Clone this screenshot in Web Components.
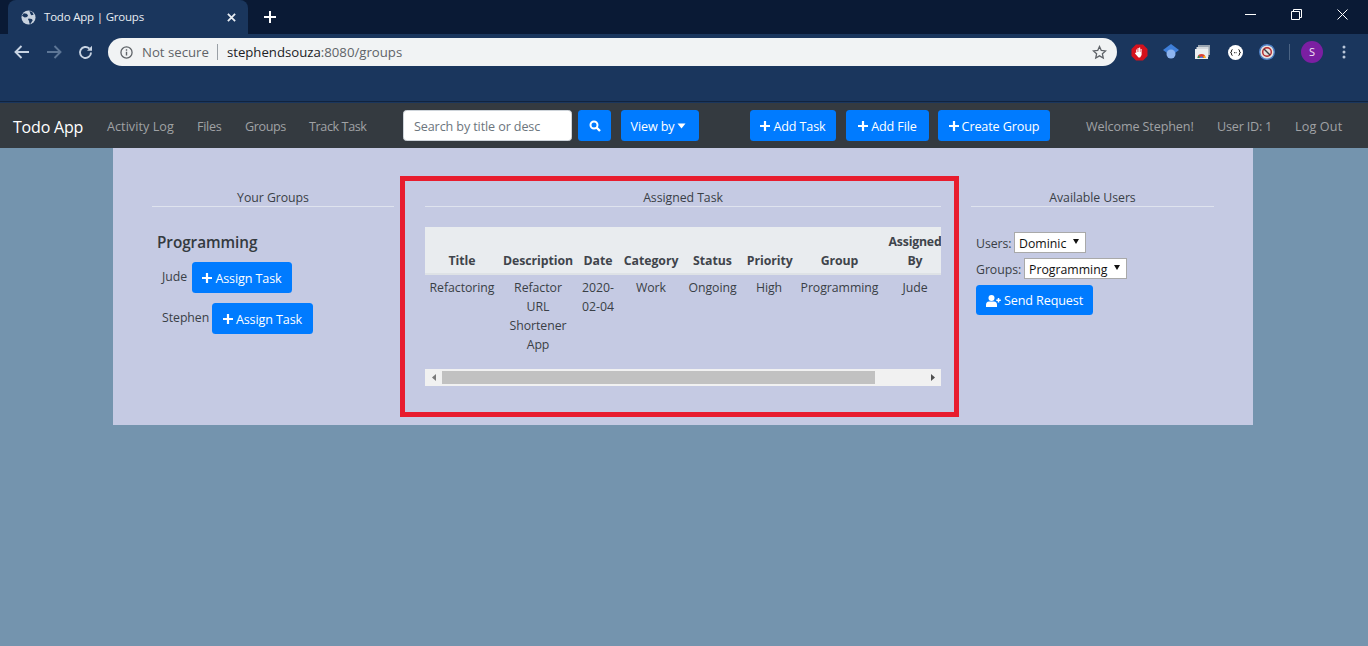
<!DOCTYPE html>
<html lang="en">
<head>
<meta charset="utf-8">
<title>Todo App | Groups</title>
<style>
  html, body { margin: 0; padding: 0; height: 646px; overflow: hidden; background: #7494ae; }
  body { font-family: "Open Sans", "Noto Sans", sans-serif; font-size: 12.6px; color: #3a3f46; }
</style>
</head>
<body>
<browser-frame></browser-frame>
<app-navbar></app-navbar>
<group-page></group-page>

<script>
const ICON_PLUS = `<svg width="10" height="10" viewBox="0 0 10 10"><path d="M5 0v10M0 5h10" stroke="#fff" stroke-width="2.2" fill="none"/></svg>`;

class BrowserFrame extends HTMLElement {
  constructor() {
    super();

    const template = document.createElement( 'template' );
    template.innerHTML = `
      <style>
      :host { display: block; height: 103px; background: #1a365d; font-family: "Open Sans", sans-serif; }
      .strip { height: 34px; background: #0a1a35; display: flex; align-items: flex-end; box-sizing: border-box; }
      .tab { margin-left: 8px; width: 240px; height: 34px; background: #1a365d; border-radius: 8px 8px 0 0;
        display: flex; align-items: center; box-sizing: border-box; padding: 0 12px 0 13px; color: #e8edf3; font-size: 11.500px; letter-spacing: -.2px; }
      .tab span { margin-left: 8px; flex: 1; margin-top: -2px; }
      .new { margin: 0 0 0 16px; height: 34px; display: flex; align-items: center; }
      .win { margin-left: auto; display: flex; align-items: center; height: 34px; padding-right: 20px; gap: 35px; padding-bottom: 6px; box-sizing: border-box; }
      .bar { height: 68px; box-sizing: border-box; border-bottom: 1px solid #10233f; display: flex; align-items: flex-start; padding: 4px 0 0 14px; }
      .nav { display: flex; align-items: center; height: 28px; gap: 16px; }
      .url { margin-left: 15px; width: 1009px; height: 28px; border-radius: 14px; background: #f1f3f4; display: flex; align-items: center;
        box-sizing: border-box; padding: 0 10px 0 12px; font-size: 13.200px; color: #5f6368; }
      .url .ns { margin-left: 9px; }
      .url i { width: 1px; height: 16px; background: #9aa0a6; margin: 0 9px 0 8px; }
      .url b { font-weight: 400; color: #202124; }
      .url .star { margin-left: auto; }
      .ext { display: flex; align-items: center; height: 28px; margin-left: 14px; }
      .ext > * { flex: none; }
      .sep { width: 1px; height: 16px; background: #4a6384; margin: 0 11px 0 14px; }
      .avatar { width: 22px; height: 22px; border-radius: 50%; background: #7b1fa2; color: #f3e5f5; font-size: 11px; line-height: 22px; text-align: center; }
      </style>
      <div class="strip">
        <div class="tab">
          <svg width="15" height="15" viewBox="0 0 16 16"><circle cx="8" cy="8" r="7.5" fill="#c8d2de"/><path d="M3 3.5l3 .5 1.5 1.5-1 2-2.5 .5-3-2zM9 1l3 1 1.5 3-2.5 .5-1-1.5zM8 9l3.5 .5 1 1.5-2.5 4-1-.5-.5-3-1-1z" fill="#1a365d"/></svg>
          <span>Todo App | Groups</span>
          <svg width="9" height="9" viewBox="0 0 10 10"><path d="M1 1l8 8M9 1l-8 8" stroke="#e8edf3" stroke-width="2" fill="none"/></svg>
        </div>
        <div class="new"><svg width="12" height="12" viewBox="0 0 12 12"><path d="M6 0v12M0 6h12" stroke="#fff" stroke-width="2" fill="none"/></svg></div>
        <div class="win">
          <svg width="11" height="11" viewBox="0 0 11 11"><path d="M0 5.5h11" stroke="#fff" fill="none"/></svg>
          <svg width="11" height="11" viewBox="0 0 11 11"><path d="M.5 2.5h8v8h-8zM2.5 2.5v-2h8v8h-2" stroke="#fff" fill="none"/></svg>
          <svg width="11" height="11" viewBox="0 0 11 11"><path d="M.5 .5l10 10M10.5 .5l-10 10" stroke="#fff" fill="none"/></svg>
        </div>
      </div>
      <div class="bar">
        <div class="nav">
          <svg width="16" height="14" viewBox="0 0 16 14"><path d="M15 7H2M7.5 1L1.5 7l6 6" stroke="#c8d4e3" stroke-width="1.9" fill="none"/></svg>
          <svg width="16" height="14" viewBox="0 0 16 14"><path d="M1 7h13M8.5 1l6 6-6 6" stroke="#5d7696" stroke-width="1.9" fill="none"/></svg>
          <svg width="15" height="15" viewBox="0 0 15 15"><path d="M13 7.5a5.5 5.5 0 1 1-1.7-4" stroke="#c8d4e3" stroke-width="1.9" fill="none"/><path d="M14 .8v5h-5z" fill="#c8d4e3"/></svg>
        </div>
        <div class="url">
          <svg width="13" height="13" viewBox="0 0 14 14"><circle cx="7" cy="7" r="6" stroke="#5f6368" stroke-width="1.4" fill="none"/><path d="M7 6.2v4M7 3.6v1.5" stroke="#5f6368" stroke-width="1.5" fill="none"/></svg>
          <span class="ns">Not secure</span><i></i><span><b>stephendsouza</b>:8080/groups</span>
          <svg class="star" width="15" height="15" viewBox="0 0 16 16"><path d="M8 1.6l1.9 4.2 4.6 .5-3.4 3.1 .9 4.5-4-2.3-4 2.3 .9-4.5-3.4-3.1 4.6-.5z" stroke="#5f6368" stroke-width="1.4" fill="none"/></svg>
        </div>
        <div class="ext">
          <svg width="17" height="17" viewBox="0 0 17 17"><path d="M5 .5h7L16.500 5v7L12 16.500H5L.5 12V5z" fill="#d4111c"/><path d="M5.200 9V5.500h1V8h.4V4h1.100v4h.4V3.600h1.100V8h.4V5h1v6l-1.500 2.500H7.500L4 9.500l.6-.9z" fill="#fff"/></svg>
          <svg style="margin-left:15px" width="16" height="17" viewBox="0 0 16 17"><path d="M8 0l8 6-8 6-8-6z" fill="#3f7fd9"/><circle cx="8" cy="10" r="4.500" fill="#8db4ef"/></svg>
          <svg style="margin-left:16px" width="15" height="14" viewBox="0 0 15 14"><path d="M3 0h12v10H3z" fill="#9aa5b1"/><path d="M1.500 2h12v10h-12z" fill="#d5d9dd"/><path d="M0 4h13v10H0z" fill="#eceff1"/><path d="M2.500 13a4 4 0 0 1 8 0z" fill="#db4437"/><path d="M5 13a1.500 1.500 0 0 1 3 0z" fill="#4285f4"/><path d="M8.800 13h1.700a4 4 0 0 0-1-2.600l-1.200 1z" fill="#fbbc05"/><path d="M2.500 13h1.700l.5-1.500-1.200-1z" fill="#0f9d58"/></svg>
          <svg style="margin-left:18px" width="15" height="15" viewBox="0 0 15 15"><circle cx="7.500" cy="7.500" r="7.500" fill="#fff"/><path d="M4.500 4.500q-1 0-1 1.500t-1 1.500q1 0 1 1.500t1 1.500M10.500 4.500q1 0 1 1.500t1 1.500q-1 0-1 1.500t-1 1.500" stroke="#222" fill="none"/><path d="M6 7.700h3" stroke="#222" stroke-dasharray="1 .6" fill="none"/></svg>
          <svg style="margin-left:16px" width="16" height="16" viewBox="0 0 16 16"><circle cx="8" cy="8" r="7.300" fill="#e8e2de" stroke="#4f81c7" stroke-width="1.400"/><circle cx="8" cy="8" r="4.300" fill="none" stroke="#b3262b" stroke-width="1.400"/><path d="M5 5l6 6" stroke="#3a3f46" stroke-width="1.400"/></svg>
          <div class="sep"></div>
          <div class="avatar">S</div>
          <svg style="margin-left:19px" width="4" height="14" viewBox="0 0 4 14"><circle cx="2" cy="2" r="1.500" fill="#b9c6d8"/><circle cx="2" cy="7" r="1.500" fill="#b9c6d8"/><circle cx="2" cy="12" r="1.500" fill="#b9c6d8"/></svg>
        </div>
      </div>
    `;

    this._shadowRoot = this.attachShadow( {mode: 'open'} );
    this._shadowRoot.appendChild( template.content.cloneNode( true ) );
  }
}

class AppButton extends HTMLElement {
  constructor() {
    super();

    const template = document.createElement( 'template' );
    template.innerHTML = `
      <style>
      :host { display: inline-flex; align-items: center; justify-content: center; box-sizing: border-box; height: 31px; padding: 1px 0 0;
        background: #007bff; color: #fff; border-radius: 3.500px; font-family: "Open Sans", sans-serif; font-size: 12.600px; letter-spacing: -.12px; white-space: nowrap; flex: none; }
      ::slotted( svg ) { margin-right: 3px; }
      </style>
      <slot></slot>
    `;

    this._shadowRoot = this.attachShadow( {mode: 'open'} );
    this._shadowRoot.appendChild( template.content.cloneNode( true ) );
  }
}

class AppNavbar extends HTMLElement {
  constructor() {
    super();

    const template = document.createElement( 'template' );
    template.innerHTML = `
      <style>
      :host { display: flex; align-items: center; height: 45px; background: #343a40; box-sizing: border-box; padding: 0 0 0 13px; font-family: "Open Sans", sans-serif; font-size: 12.600px; letter-spacing: -.12px; }
      .brand { color: #fff; font-size: 16px; letter-spacing: -.2px; width: 94px; flex: none; padding-top: 3px; }
      a { color: #a0a2a5; text-decoration: none; flex: none; padding-top: 1px; }
      input { box-sizing: border-box; width: 169px; height: 31px; border: 1px solid #ced4da; border-radius: 3.500px; padding: 1px 10px 0; font: inherit; letter-spacing: inherit; background: #fff; flex: none; }
      input::placeholder { color: #6c757d; opacity: 1; }
      </style>
      <span class="brand">Todo App</span>
      <a style="width:90px;letter-spacing:.05px">Activity Log</a>
      <a style="width:48px;letter-spacing:-.3px">Files</a>
      <a style="width:64px;letter-spacing:-.4px">Groups</a>
      <a style="width:94px;letter-spacing:-.4px">Track Task</a>
      <input type="text" placeholder="Search by title or desc">
      <app-button style="margin-left:6px;width:33px">
        <svg width="12" height="12" viewBox="0 0 12 12" style="margin:0"><circle cx="5" cy="5" r="3.500" stroke="#fff" stroke-width="2" fill="none"/><path d="M7.500 7.500l3.500 3.500" stroke="#fff" stroke-width="2.400" fill="none"/></svg>
      </app-button>
      <app-button style="margin-left:10px;width:78px">View by<svg width="9" height="6" viewBox="0 0 9 6" style="margin-left:3px"><path d="M.5 .5h8L4.500 5.500z" fill="#fff"/></svg></app-button>
      <app-button style="margin-left:51px;width:86px">${ICON_PLUS}Add Task</app-button>
      <app-button style="margin-left:10px;width:83px">${ICON_PLUS}Add File</app-button>
      <app-button style="margin-left:9px;width:112px">${ICON_PLUS}Create Group</app-button>
      <a style="margin-left:36px;width:131px">Welcome Stephen!</a>
      <a style="width:78px;letter-spacing:-.2px">User ID: 1</a>
      <a style="letter-spacing:.15px">Log Out</a>
    `;

    this._shadowRoot = this.attachShadow( {mode: 'open'} );
    this._shadowRoot.appendChild( template.content.cloneNode( true ) );
  }
}

class PanelColumn extends HTMLElement {
  constructor() {
    super();

    const template = document.createElement( 'template' );
    template.innerHTML = `
      <style>
      :host { display: block; font-family: "Open Sans", sans-serif; font-size: 12.300px; letter-spacing: -.05px; color: #3a3f46; }
      h2 { font: inherit; margin: 0; height: 18px; line-height: 17px; text-align: center; border-bottom: 1px solid #dfe3ee; box-sizing: border-box; }
      </style>
      <h2></h2>
      <slot></slot>
    `;

    this._shadowRoot = this.attachShadow( {mode: 'open'} );
    this._shadowRoot.appendChild( template.content.cloneNode( true ) );
    this.$title = this._shadowRoot.querySelector( 'h2' );
  }

  static get observedAttributes() {
    return [
      'label'
    ];
  }

  attributeChangedCallback( attrName, oldVal, newVal ) {
    this.$title.textContent = newVal;
  }
}

class GroupMembers extends HTMLElement {
  constructor() {
    super();

    const template = document.createElement( 'template' );
    template.innerHTML = `
      <style>
      :host { display: block; padding: 24px 0 0 5px; font-family: "Open Sans", sans-serif; font-size: 12.300px; }
      h3 { margin: 0 0 9px; font-size: 15.300px; font-weight: 600; line-height: 22px; color: #343a40; }
      .row { display: flex; align-items: flex-start; margin-bottom: 10px; padding-left: 5px; }
      .row span { line-height: 30px; flex: none; }
      </style>
      <h3>Programming</h3>
      <div class="row"><span style="width:30px">Jude</span><app-button style="width:100px">${ICON_PLUS}Assign Task</app-button></div>
      <div class="row"><span style="width:50px">Stephen</span><app-button style="width:101px">${ICON_PLUS}Assign Task</app-button></div>
    `;

    this._shadowRoot = this.attachShadow( {mode: 'open'} );
    this._shadowRoot.appendChild( template.content.cloneNode( true ) );
  }
}

class TaskTable extends HTMLElement {
  constructor() {
    super();

    const template = document.createElement( 'template' );
    template.innerHTML = `
      <style>
      :host { display: block; margin-top: 20px; font-family: "Open Sans", sans-serif; font-size: 12.300px; letter-spacing: -.05px; color: #3a3f46; }
      .clip { width: 516px; overflow: hidden; }
      table { table-layout: fixed; width: 574px; border-collapse: collapse; margin-bottom: 10px; line-height: 19px; }
      th, td { text-align: center; }
      thead th { padding: 5px 4.800px 3px; vertical-align: bottom; background: #e9ecef; border-bottom: 2px solid #dee2e6; font-weight: 700; color: #3f444b; }
      td { vertical-align: top; padding: 2.500px 0 5px; }
      td.pad { padding-left: 9px; padding-right: 9px; }
      .bar { display: flex; align-items: center; height: 17px; background: #f1f1f1; position: relative; }
      .arrow { flex: none; width: 17px; display: flex; justify-content: center; }
      .thumb { flex: none; width: 433px; height: 13px; background: #c1c1c1; }
      .right { margin-left: auto; }
      </style>
      <div class="clip">
        <table>
          <colgroup><col style="width:74px"><col style="width:78px"><col style="width:42px"><col style="width:64px"><col style="width:59px"><col style="width:54px"><col style="width:87px"><col style="width:64px"><col style="width:52px"></colgroup>
          <thead>
            <tr><th>Title</th><th style="padding-left:0;padding-right:0">Description</th><th>Date</th><th>Category</th><th>Status</th><th>Priority</th><th>Group</th><th style="padding-left:0;padding-right:0;letter-spacing:-.2px">Assigned By</th><th></th></tr>
          </thead>
          <tbody>
            <tr><td>Refactoring</td><td class="pad">Refactor URL Shortener App</td><td class="pad" style="padding-left:4px;padding-right:4px">2020-02-04</td><td>Work</td><td>Ongoing</td><td>High</td><td>Programming</td><td>Jude</td><td></td></tr>
          </tbody>
        </table>
      </div>
      <div class="bar">
        <div class="arrow"><svg width="4" height="7" viewBox="0 0 4 7"><path d="M4 0v7L0 3.500z" fill="#7a7a7a"/></svg></div>
        <div class="thumb"></div>
        <div class="arrow right"><svg width="4" height="7" viewBox="0 0 4 7"><path d="M0 0v7l4-3.500z" fill="#505050"/></svg></div>
      </div>
    `;

    this._shadowRoot = this.attachShadow( {mode: 'open'} );
    this._shadowRoot.appendChild( template.content.cloneNode( true ) );
  }
}

class LabelSelect extends HTMLElement {
  constructor() {
    super();

    const template = document.createElement( 'template' );
    template.innerHTML = `
      <style>
      :host { display: flex; align-items: center; font-family: "Open Sans", sans-serif; font-size: 12.300px; height: 21px; margin-bottom: 5px; }
      .box { position: relative; display: inline-block; }
      span { padding-top: 1px; }
      select { appearance: none; -webkit-appearance: none; display: block; box-sizing: border-box; height: 21px; border: 1px solid #a9a9a9; border-radius: 0; background: #fff; color: #111;
        font: inherit; padding: 1px 0 0 4px; outline: none; }
      svg { position: absolute; right: 7px; top: 7px; pointer-events: none; }
      </style>
      <span></span>
      <div class="box">
        <select></select>
        <svg width="6" height="5" viewBox="0 0 6 5"><path d="M0 0h6L3 5z" fill="#111"/></svg>
      </div>
    `;

    this._shadowRoot = this.attachShadow( {mode: 'open'} );
    this._shadowRoot.appendChild( template.content.cloneNode( true ) );
    this.$label = this._shadowRoot.querySelector( 'span' );
    this.$select = this._shadowRoot.querySelector( 'select' );
  }

  static get observedAttributes() {
    return [
      'label',
      'value',
      'width',
      'labelwidth'
    ];
  }

  attributeChangedCallback( attrName, oldVal, newVal ) {
    switch( attrName ) {
      case 'label':
        this.$label.textContent = newVal;
        break;
      case 'value':
        this.$select.innerHTML = `<option>${newVal}</option>`;
        break;
      case 'width':
        this.$select.style.width = `${newVal}px`;
        break;
      case 'labelwidth':
        this.$label.style.width = `${newVal}px`;
        break;
    }
  }
}

class GroupPage extends HTMLElement {
  constructor() {
    super();

    const template = document.createElement( 'template' );
    template.innerHTML = `
      <style>
      :host { display: block; width: 1140px; height: 277px; margin-left: 113px; background: #c5cae3; box-sizing: border-box; padding: 28px 0 0 39px; }
      .cols { display: grid; grid-template-columns: 248px 571px 243px; }
      .left { width: 242px; }
      .left, .right { padding-top: 13px; }
      .mark { box-sizing: border-box; width: 559px; height: 241px; border: 5px solid #e81c2e; padding: 8px 13px 0 20px; }
      .users { padding: 25px 0 0 5px; }
      </style>
      <div class="cols">
        <panel-column class="left" label="Your Groups"><group-members></group-members></panel-column>
        <div class="mark">
          <panel-column label="Assigned Task"><task-table></task-table></panel-column>
        </div>
        <panel-column class="right" label="Available Users">
          <div class="users">
            <label-select label="Users:" labelwidth="38" value="Dominic" width="72"></label-select>
            <label-select label="Groups:" labelwidth="48" value="Programming" width="103"></label-select>
            <app-button style="margin-top:1px;width:117px;height:30px">
              <svg width="15" height="12" viewBox="0 0 15 12"><circle cx="5.500" cy="3" r="3" fill="#fff"/><path d="M0 12V10q0-3.500 3-3.500h5q3 0 3 3.500v2z" fill="#fff"/><path d="M12.500 3v4.500M10.300 5.200h4.500" stroke="#fff" stroke-width="1.500"/></svg>Send Request
            </app-button>
          </div>
        </panel-column>
      </div>
    `;

    this._shadowRoot = this.attachShadow( {mode: 'open'} );
    this._shadowRoot.appendChild( template.content.cloneNode( true ) );
  }
}

window.customElements.define( 'app-button', AppButton );
window.customElements.define( 'browser-frame', BrowserFrame );
window.customElements.define( 'app-navbar', AppNavbar );
window.customElements.define( 'panel-column', PanelColumn );
window.customElements.define( 'group-members', GroupMembers );
window.customElements.define( 'task-table', TaskTable );
window.customElements.define( 'label-select', LabelSelect );
window.customElements.define( 'group-page', GroupPage );
</script>
</body>
</html>
